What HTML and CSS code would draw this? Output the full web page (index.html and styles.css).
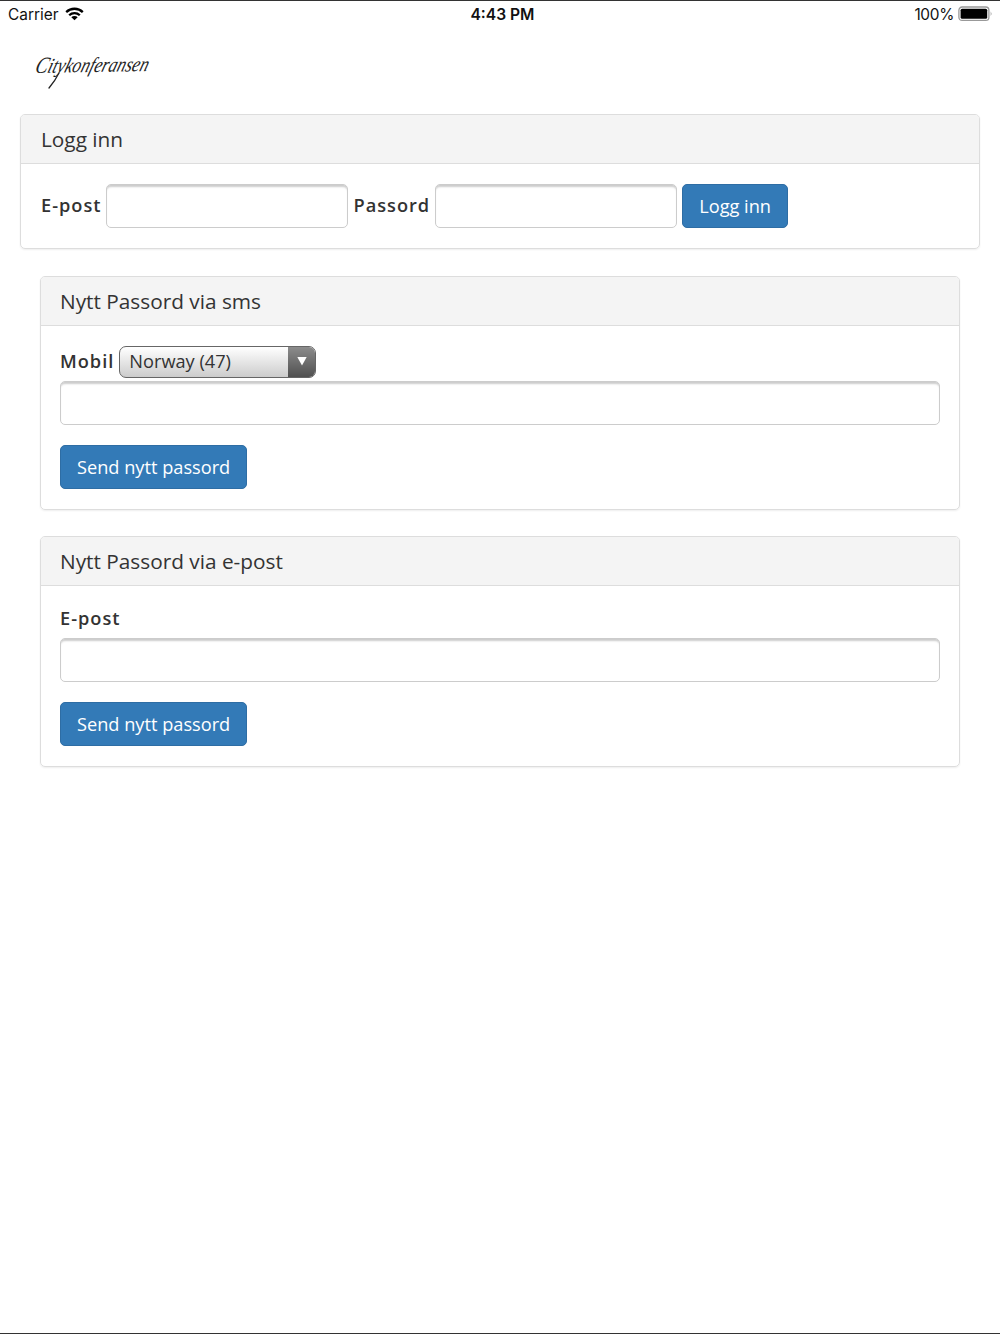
FILE: index.html
```html
<!DOCTYPE html>
<html lang="no">
<head>
  <title>Citykonferansen</title>
  <meta charset="UTF-8">
  <link rel="stylesheet" href="styles.css">
</head>
<body>
  <div class="statusbar">
    <div class="carrier">
      <span>Carrier</span>
      <svg width="19" height="14" viewBox="0 0 19 14">
        <g fill="none" stroke="#000" stroke-width="2.3">
          <path d="M1.2 5.1a12 12 0 0 1 16.6 0"></path>
          <path d="M4.2 8.3a7.6 7.6 0 0 1 10.6 0"></path>
        </g>
        <path d="M9.5 13.3L6.3 10.2a4.6 4.6 0 0 1 6.4 0z"></path>
      </svg>
    </div>
    <div class="clock">4:43 PM</div>
    <div class="battery">
      <span>100%</span>
      <svg width="35" height="16" viewBox="0 0 35 16">
        <rect x="0.9" y="1" width="30" height="13.4" rx="3.2" fill="none" stroke="#999" stroke-width="1.3"></rect>
        <rect x="2.6" y="2.7" width="26.6" height="10" rx="1.5"></rect>
        <path d="M32.7 5.3q1.6 2.4 0 4.8z" fill="#999"></path>
      </svg>
    </div>
  </div>

  <div class="logo">
    <svg width="140" height="48" viewBox="0 0 140 48">
      <g transform="translate(2 28) rotate(-1) skewX(-18)">
        <text class="logo-text" x="0" y="0" textLength="113" lengthAdjust="spacingAndGlyphs"><tspan class="logo-initial">C</tspan>itykonferansen</text>
      </g>
      <path class="logo-swash" d="M27 28Q23 36 17 43"></path>
    </svg>
  </div>

  <div class="panel">
    <div class="panel-heading">Logg inn</div>
    <form class="panel-body form-inline">
      <label for="email">E-post</label>
      <input type="text" id="email" class="form-control">
      <label for="password">Passord</label>
      <input type="password" id="password" class="form-control">
      <button type="button" class="btn">Logg inn</button>
    </form>
  </div>

  <div class="reset">
    <div class="panel">
      <div class="panel-heading">Nytt Passord via sms</div>
      <form class="panel-body">
        <div class="mobile-row">
          <label for="country">Mobil</label>
          <div class="select-wrap">
            <select id="country">
              <option>Norway (47)</option>
            </select>
            <span class="select-arrow">
              <svg width="10" height="9" viewBox="0 0 10 9"><path d="M0.3 0h9.4L5 8.6z" fill="#fff"></path></svg>
            </span>
          </div>
        </div>
        <input type="text" class="form-control">
        <button type="button" class="btn">Send nytt passord</button>
      </form>
    </div>

    <div class="panel">
      <div class="panel-heading">Nytt Passord via e-post</div>
      <form class="panel-body">
        <label for="reset-email" class="block-label">E-post</label>
        <input type="text" id="reset-email" class="form-control">
        <button type="button" class="btn">Send nytt passord</button>
      </form>
    </div>
  </div>
</body>
</html>
```
FILE: styles.css
```css
* {
  box-sizing: border-box;
}
body {
  margin: 0;
  height: 1334px;
  border-top: 1px solid #333;
  border-bottom: 1px solid #333;
  background-color: #fff;
  font-family: "Open Sans", sans-serif;
  font-size: 18.2px;
  color: #333;
}
.statusbar {
  display: grid;
  grid-template-columns: 1fr auto 1fr;
  height: 27px;
  padding: 0 7px 0 8px;
  font-family: Inter, sans-serif;
  font-size: 15.4px;
  line-height: 27px;
  color: #111;
}
.carrier, .battery {
  display: flex;
  align-items: center;
}
.carrier {
  gap: 7px;
}
.carrier svg {
  margin-top: -1px;
}
.battery {
  justify-content: flex-end;
  gap: 4px;
  letter-spacing: -0.3px;
}
.battery svg {
  margin-top: -1px;
}
.clock {
  font-weight: 600;
  font-size: 15.6px;
  padding-left: 4px;
}
.logo {
  height: 48px;
  margin: 17px 0 21px 32px;
}
.logo svg {
  display: block;
}
.logo-text {
  font-family: "Liberation Serif", serif;
  font-style: italic;
  font-size: 21px;
  fill: #222;
}
.logo-initial {
  font-size: 23px;
}
.logo-swash {
  fill: none;
  stroke: #222;
  stroke-width: 1.3;
  stroke-linecap: round;
}
.panel {
  margin: 0 20px 27px;
  border: 1px solid #ddd;
  border-radius: 5px;
  box-shadow: 0 1px 2px rgba(0,0,0,0.07);
}
.panel-heading {
  height: 49px;
  padding: 0 20px;
  border-bottom: 1px solid #ddd;
  border-radius: 4px 4px 0 0;
  background-color: #f4f4f4;
  font-size: 20.8px;
  line-height: 49px;
}
.panel-body {
  margin: 0;
  padding: 20px 19px;
}
.form-inline {
  display: flex;
  padding: 20px;
}
label {
  font-weight: 600;
  letter-spacing: 1px;
  line-height: 26px;
}
.form-control {
  display: block;
  width: 100%;
  height: 44px;
  padding: 8px 16px;
  border: 1px solid #ccc;
  border-radius: 5px;
  background-color: #fff;
  box-shadow: inset 0 3px 2px -1px #ccc;
  font: inherit;
}
.form-inline label {
  line-height: 42px;
}
.form-inline .form-control {
  width: 242px;
  margin: 0 5px;
}
.btn {
  display: block;
  height: 44px;
  margin-top: 20px;
  padding: 0 16px 1px;
  border: 1px solid #2e6da4;
  border-radius: 5px;
  background-color: #337ab7;
  color: #fff;
  font: inherit;
  cursor: pointer;
}
.form-inline .btn {
  margin-top: 0;
}
.reset .panel {
  margin: 0 40px 26px;
}
.reset .panel-heading {
  padding: 0 19px;
}
.mobile-row {
  display: flex;
  height: 35px;
  gap: 5px;
}
.mobile-row label {
  line-height: 30px;
}
.select-wrap {
  display: flex;
  width: 197px;
  height: 32px;
  border: 1px solid #666;
  border-radius: 7px;
  overflow: hidden;
  background: linear-gradient(#fff, #ccc);
}
.select-wrap select {
  appearance: none;
  flex: 1;
  padding: 0 9px 2px;
  border: 0;
  background: none;
  color: #333;
  font: inherit;
}
.select-arrow {
  display: flex;
  align-items: center;
  justify-content: center;
  width: 27px;
  padding-bottom: 2px;
  background: linear-gradient(#8c8c8c, #505050);
}
.reset .block-label {
  display: block;
  margin-bottom: 7px;
  line-height: 25px;
}
```
